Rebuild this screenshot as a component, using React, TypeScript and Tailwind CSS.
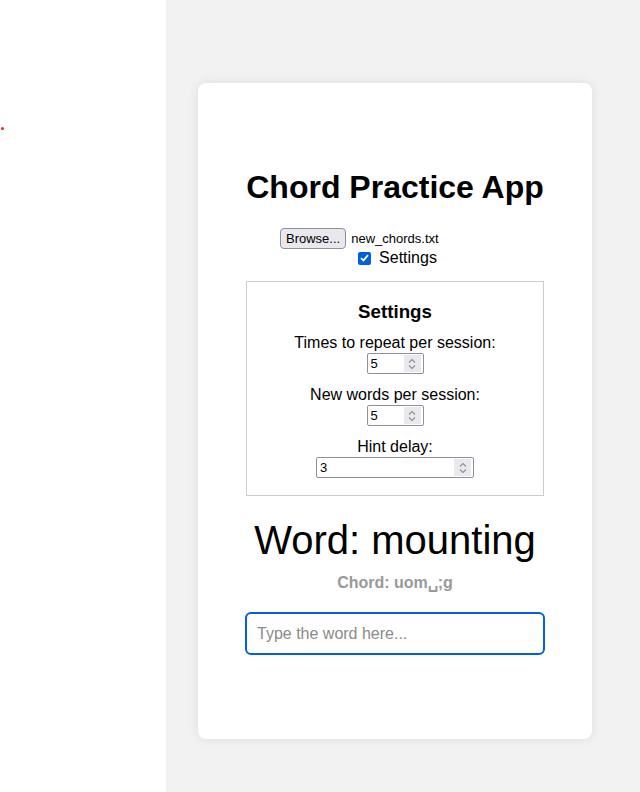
import React from 'react'

function Spinner() {
  return (
    <div className="flex h-[17px] w-[17px] flex-col items-center justify-center gap-[2px] bg-[#e9e9ed]">
      <svg width="8" height="5" viewBox="0 0 8 5" fill="none">
        <path d="M1 4.5 L4 1.5 L7 4.5" stroke="#8f8f9d" strokeWidth="1.1" />
      </svg>
      <svg width="8" height="5" viewBox="0 0 8 5" fill="none">
        <path d="M1 0.5 L4 3.5 L7 0.5" stroke="#8f8f9d" strokeWidth="1.1" />
      </svg>
    </div>
  )
}

function NumberBox({ value, wide }: { value: string; wide?: boolean }) {
  return (
    <div
      className={
        'flex h-[21px] items-center justify-between rounded-[2px] border border-[#8f8f9d] bg-white pl-[3px] pr-[2px] text-[13px] text-black ' +
        (wide ? 'w-[158px]' : 'w-[57px]')
      }
    >
      <span>{value}</span>
      <Spinner />
    </div>
  )
}

function Field({ label, value, wide }: { label: string; value: string; wide?: boolean }) {
  return (
    <div className="flex flex-col items-center">
      <div className="h-[20px] text-[16px] leading-[20px]">{label}</div>
      <NumberBox value={value} wide={wide} />
    </div>
  )
}

export default function App() {
  return (
    <div className="flex min-h-[792px] font-['Liberation_Sans',Arial,sans-serif] text-black">
      <div className="w-[166px] bg-white">
        <div className="ml-px mt-[127px] h-[3px] w-[3px] rounded-full bg-[#e8282e]" />
      </div>

      <div className="flex-1 bg-[#f2f2f2] pl-8 pt-[83px]">
        <div className="flex h-[656px] w-[394px] flex-col items-center rounded-lg bg-white px-12 pt-[86px] shadow-[0_0_12px_rgba(0,0,0,0.09)]">
          <h1 className="text-[32px] font-bold leading-[37px]">Chord Practice App</h1>

          <div className="mt-[22px] flex h-[21px] w-[230px] items-center self-center">
            <button className="h-[21px] rounded-[4px] border border-[#8f8f9d] bg-[#e9e9ed] px-[5px] text-[13px] leading-none">
              Browse...
            </button>
            <span className="ml-[5px] text-[13px]">new_chords.txt</span>
          </div>

          <label className="flex h-[18px] items-center pl-[5px] text-[16px]">
            <span className="mr-[8px] flex h-[13px] w-[13px] items-center justify-center rounded-[2px] bg-[#0060df]">
              <svg width="9" height="8" viewBox="0 0 9 8" fill="none">
                <path d="M1 4.2 L3.4 6.5 L8 1.2" stroke="white" strokeWidth="1.8" />
              </svg>
            </span>
            Settings
          </label>

          <div className="mt-[14px] flex w-full flex-col items-center border border-[#cccccc] pb-[17px] pt-[19px]">
            <h3 className="text-[18.72px] font-bold leading-[22px]">Settings</h3>
            <div className="mt-[10px] flex flex-col items-center gap-[11px]">
              <Field label="Times to repeat per session:" value="5" />
              <Field label="New words per session:" value="5" />
              <Field label="Hint delay:" value="3" wide />
            </div>
          </div>

          <div className="mt-[21px] text-[40px] leading-[46px]">Word: mounting</div>
          <div className="mt-[11px] text-[16px] font-bold leading-[18px] text-[#999999]">Chord: uom␣;g</div>

          <input
            autoFocus
            placeholder="Type the word here..."
            className="mt-[20px] h-[43px] w-[300px] rounded-[6px] border-2 border-[#0060df] px-[10px] text-[16px] outline-none placeholder:text-[#8a8a8a]"
          />
        </div>
      </div>
    </div>
  )
}
